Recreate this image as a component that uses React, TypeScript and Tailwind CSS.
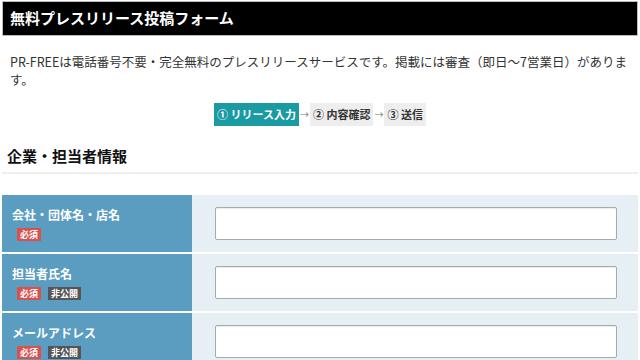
const font = { fontFamily: '"Noto Sans CJK JP", "Noto Sans", sans-serif' };

type Field = { label: string; privateField?: boolean };

const fields: Field[] = [
  { label: "会社・団体名・店名" },
  { label: "担当者氏名", privateField: true },
  { label: "メールアドレス", privateField: true },
];

function Badge({ children, tone }: { children: string; tone: "red" | "gray" }) {
  return (
    <span
      className={
        tone === "red"
          ? "inline-flex h-[13px] items-center bg-[#d9504c] px-[3px] text-[9px] font-bold leading-none text-white"
          : "inline-flex h-[13px] items-center bg-[#555555] px-[3px] text-[9px] font-bold leading-none text-white"
      }
    >
      {children}
    </span>
  );
}

function FormRow({ field }: { field: Field }) {
  return (
    <div className="flex h-[57px]">
      <div className="w-[190px] bg-[#5b9dc1] pl-[10px] pt-[13px]">
        <div className="text-[12px] font-bold leading-[14px] text-white">{field.label}</div>
        <div className="mt-[6px] flex gap-[7px] pl-[5px]">
          <Badge tone="red">必須</Badge>
          {field.privateField && <Badge tone="gray">非公開</Badge>}
        </div>
      </div>
      <div className="flex-1 bg-[#e5eff4] pl-[23px] pr-[21px] pt-[12px]">
        <input className="h-[33px] w-full rounded-[2px] border border-[#a9a9a9] bg-white shadow-[inset_0_1px_1px_rgba(0,0,0,0.08)]" />
      </div>
    </div>
  );
}

export default function App() {
  return (
    <div className="h-[360px] w-[640px] overflow-hidden bg-white px-[2px] pt-[1px] text-[#222]" style={font}>
      <div className="flex h-[35px] items-center border border-[#bdbdbd] bg-black pl-[7px]">
        <h1 className="text-[15px] font-bold text-white">無料プレスリリース投稿フォーム</h1>
      </div>

      <p className="mt-[17px] px-[8px] pr-[7px] text-[12.5px] leading-[18px] text-[#333]">
        PR-FREEは電話番号不要・完全無料のプレスリリースサービスです。掲載には審査（即日〜7営業日）があります。
      </p>

      <div className="mt-[14px] flex items-center justify-center text-[11px] font-bold">
        <span className="flex h-[23px] items-center bg-[#1a9aa2] px-[3px] text-white">① リリース入力</span>
        <span className="px-[1px] text-[9px] font-normal text-[#777]">→</span>
        <span className="flex h-[23px] items-center bg-[#eeeeee] px-[3px] text-[#333]">② 内容確認</span>
        <span className="px-[1px] text-[9px] font-normal text-[#777]">→</span>
        <span className="flex h-[23px] items-center bg-[#eeeeee] px-[3px] text-[#333]">③ 送信</span>
      </div>

      <h2 className="mt-[20px] border-b-2 border-[#eeeeee] pb-[6px] pl-[5px] text-[15px] font-bold leading-[20px] text-[#111]">
        企業・担当者情報
      </h2>

      <div className="mt-[21px] flex flex-col gap-[2px] bg-white">
        {fields.map((f) => (
          <FormRow key={f.label} field={f} />
        ))}
      </div>
    </div>
  );
}
